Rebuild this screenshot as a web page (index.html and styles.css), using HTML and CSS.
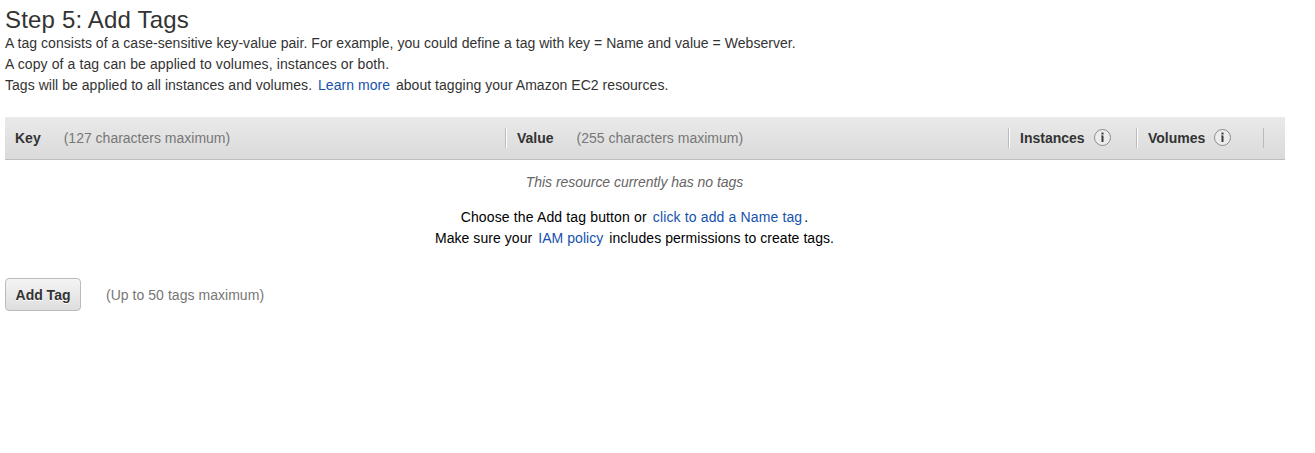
FILE: index.html
```
<!DOCTYPE html>
<html lang="en">
<head>
    <meta charset="UTF-8">
    <meta name="viewport" content="width=device-width, initial-scale=1.0">
    <title>Step 5: Add Tags</title>
    <link rel="stylesheet" href="styles.css">
</head>
<body>
    <div class="wizard-step">
        <h1>Step 5: Add Tags</h1>
        <div class="description">
            <div class="line-1">A tag consists of a case-sensitive key-value pair. For example, you could define a tag with key = Name and value = Webserver.</div>
            <div class="line-2">A copy of a tag can be applied to volumes, instances or both.</div>
            <div class="line-3">Tags will be applied to all instances and volumes. <a href="#">Learn more</a> about tagging your Amazon EC2 resources.</div>
        </div>

        <div class="tag-header">
            <div class="column key"><b>Key</b><span class="hint">(127 characters maximum)</span></div>
            <div class="column value"><b>Value</b><span class="hint">(255 characters maximum)</span></div>
            <div class="column instances"><b>Instances</b>
                <svg class="info" viewBox="0 0 18 18"><circle cx="8.5" cy="8.5" r="8"/><path d="M7.5 3.5h2v2h-2zM7 6.5h2.5v6.5h-2V7.3H7z"/></svg>
            </div>
            <div class="column volumes"><b>Volumes</b>
                <svg class="info" viewBox="0 0 18 18"><circle cx="8.5" cy="8.5" r="8"/><path d="M7.5 3.5h2v2h-2zM7 6.5h2.5v6.5h-2V7.3H7z"/></svg>
            </div>
            <div class="column last"></div>
        </div>

        <div class="empty">
            <div class="no-tags">This resource currently has no tags</div>
            <div class="choose">Choose the Add tag button or <a href="#">click to add a Name tag</a>.</div>
            <div class="policy">Make sure your <a href="#">IAM policy</a> includes permissions to create tags.</div>
        </div>

        <div class="actions">
            <button class="add-tag">Add Tag</button>
            <span class="hint">(Up to 50 tags maximum)</span>
        </div>
    </div>
</body>
</html>
```
FILE: styles.css
```
body {
    margin: 0;
    font-family: "Helvetica Neue", "Liberation Sans", Arial, sans-serif;
    font-size: 14px;
    line-height: 21px;
    color: #333;
    background: #fff;
}

.wizard-step {
    width: 1280px;
    padding: 6px 5px 0;
    white-space: nowrap;
}

h1 {
    margin: 0;
    font-size: 24px;
    font-weight: normal;
    line-height: 27px;
    letter-spacing: 0.18px;
}

a {
    margin: 0 2px;
    color: #1652ad;
    text-decoration: none;
}

.description {
    letter-spacing: 0.04px;
}

.line-2 {
    letter-spacing: 0.11px;
}

.tag-header {
    display: flex;
    align-items: center;
    box-sizing: border-box;
    height: 43px;
    margin-top: 21px;
    background: linear-gradient(#eaeaea, #dadada);
    border-bottom: 1px solid #bfbfbf;
}

.column {
    display: flex;
    align-items: center;
    box-sizing: border-box;
    height: 20px;
    padding-left: 11px;
    border-left: 1px solid #bbb;
    box-shadow: inset 1px 0 #fff;
}

.column.key {
    width: 500px;
    padding-left: 10px;
    border-left: none;
    box-shadow: none;
}

.column.value {
    width: 503px;
}

.column.instances {
    width: 128px;
}

.column.volumes {
    width: 127px;
}

.column.last {
    box-shadow: none;
}

.hint {
    color: #777;
}

.column .hint {
    margin-left: 23px;
}

.info {
    width: 18px;
    height: 18px;
    margin-left: 9px;
}

.info circle {
    fill: #ececec;
    stroke: #8c8c8c;
}

.info path {
    fill: #3a3a3a;
}

.empty {
    padding-top: 12px;
    width: 1259px;
    color: #000;
    text-align: center;
}

.no-tags {
    margin-bottom: 14px;
    color: #666;
    font-style: italic;
    letter-spacing: -0.03px;
}

.choose {
    letter-spacing: 0.14px;
}

.policy {
    letter-spacing: 0.06px;
}

.actions {
    display: flex;
    align-items: center;
    margin-top: 29px;
}

.actions .hint {
    padding-top: 2px;
    letter-spacing: 0.04px;
}

.add-tag {
    box-sizing: border-box;
    width: 76px;
    height: 33px;
    margin-right: 25px;
    padding: 0;
    font-family: inherit;
    font-size: 14px;
    font-weight: bold;
    color: #333;
    text-shadow: 0 1px #fff;
    background: linear-gradient(#f4f4f4, #dedede);
    border: 1px solid #bbb;
    border-radius: 4px;
}
```
